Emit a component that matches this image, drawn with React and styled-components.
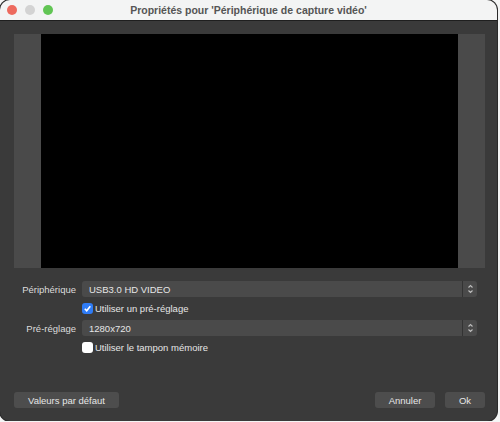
import React from "react"
import styled, { createGlobalStyle } from "styled-components"

const GlobalStyle = createGlobalStyle`
  html, body {
    margin: 0;
    padding: 0;
    background: #f4f5f5;
  }
  body {
    font-family: "Liberation Sans", "Noto Sans", Arial, sans-serif;
  }
`

const Window = styled.div`
  width: 497px;
  height: 421px;
  border-radius: 10px;
  overflow: hidden;
  background: #3a3a3a;
  display: flex;
  flex-direction: column;
  box-shadow: 0 0 0 1px #2a2a2a;
`

const TitleBar = styled.div`
  height: 20px;
  flex: none;
  background: #f3f4f4;
  border-bottom: 1px solid #1f1f1f;
  display: flex;
  align-items: center;
  position: relative;
  justify-content: center;
`

const Lights = styled.div`
  position: absolute;
  left: 7px;
  top: 5px;
  display: flex;
  gap: 8px;
`

const Light = styled.span`
  width: 10px;
  height: 10px;
  border-radius: 50%;
  background: ${(p) => p.color};
`

const Title = styled.div`
  font-size: 10.5px;
  font-weight: bold;
  color: #555555;
`

const Body = styled.div`
  flex: 1;
  display: flex;
  flex-direction: column;
  padding: 13px 12px 13px 14px;
`

const Preview = styled.div`
  height: 234px;
  display: flex;
  background: #4a4a4a;
`

const Screen = styled.div`
  flex: 1;
  margin: 0 27px;
  background: #000;
`

const Form = styled.div`
  margin-top: 13px;
  margin-right: 8px;
  display: grid;
  grid-template-columns: 62px 1fr;
  column-gap: 6px;
  row-gap: 4px;
  align-items: center;
`

const Label = styled.div`
  text-align: right;
  font-size: 9.5px;
  color: #dcdcdc;
`

const Select = styled.div`
  height: 16px;
  background: #4a4a4a;
  border-radius: 3px;
  display: flex;
  align-items: center;
  font-size: 9.5px;
  color: #e6e6e6;
`

const SelectValue = styled.div`
  flex: 1;
  padding-left: 7px;
`

const Stepper = styled.div`
  width: 14px;
  height: 16px;
  border-left: 1px solid #333;
  display: flex;
  align-items: center;
  justify-content: center;
`

const Check = styled.label`
  grid-column: 2;
  display: flex;
  align-items: center;
  gap: 2px;
  font-size: 9.5px;
  color: #e6e6e6;
  height: 15px;
`

const Box = styled.span`
  width: 11px;
  height: 11px;
  border-radius: 3px;
  background: ${(p) => (p.checked ? "#2f7cf6" : "#ffffff")};
  display: flex;
  align-items: center;
  justify-content: center;
`

const Footer = styled.div`
  margin-top: auto;
  display: flex;
  align-items: center;
  gap: 10px;
`

const Button = styled.div`
  height: 16px;
  width: ${(p) => p.width}px;
  background: #4d4d4d;
  border-radius: 3px;
  font-size: 9.5px;
  color: #e6e6e6;
  display: flex;
  align-items: center;
  justify-content: center;
  margin-left: ${(p) => (p.push ? "auto" : "0")};
`

const Chevrons = () => (
  <svg width="7" height="10" viewBox="0 0 7 10" fill="none" stroke="#bdbdbd" strokeWidth="1.1">
    <path d="M1.5 3.5 L3.5 1.5 L5.5 3.5" />
    <path d="M1.5 6.5 L3.5 8.5 L5.5 6.5" />
  </svg>
)

const Tick = () => (
  <svg width="9" height="9" viewBox="0 0 9 9" fill="none" stroke="#fff" strokeWidth="1.6">
    <path d="M1.8 4.8 L3.7 6.8 L7.3 2.2" />
  </svg>
)

export default function App() {
  return (
    <>
      <GlobalStyle />
      <Window>
        <TitleBar>
          <Lights>
            <Light color="#ed6a5e" />
            <Light color="#d3d3d3" />
            <Light color="#61c554" />
          </Lights>
          <Title>Propriétés pour 'Périphérique de capture vidéo'</Title>
        </TitleBar>
        <Body>
          <Preview>
            <Screen />
          </Preview>
          <Form>
            <Label>Périphérique</Label>
            <Select>
              <SelectValue>USB3.0 HD VIDEO</SelectValue>
              <Stepper>
                <Chevrons />
              </Stepper>
            </Select>
            <Check>
              <Box checked>
                <Tick />
              </Box>
              Utiliser un pré-réglage
            </Check>
            <Label>Pré-réglage</Label>
            <Select>
              <SelectValue>1280x720</SelectValue>
              <Stepper>
                <Chevrons />
              </Stepper>
            </Select>
            <Check>
              <Box />
              Utiliser le tampon mémoire
            </Check>
          </Form>
          <Footer>
            <Button width={105}>Valeurs par défaut</Button>
            <Button width={60} push>
              Annuler
            </Button>
            <Button width={40}>Ok</Button>
          </Footer>
        </Body>
      </Window>
    </>
  )
}
